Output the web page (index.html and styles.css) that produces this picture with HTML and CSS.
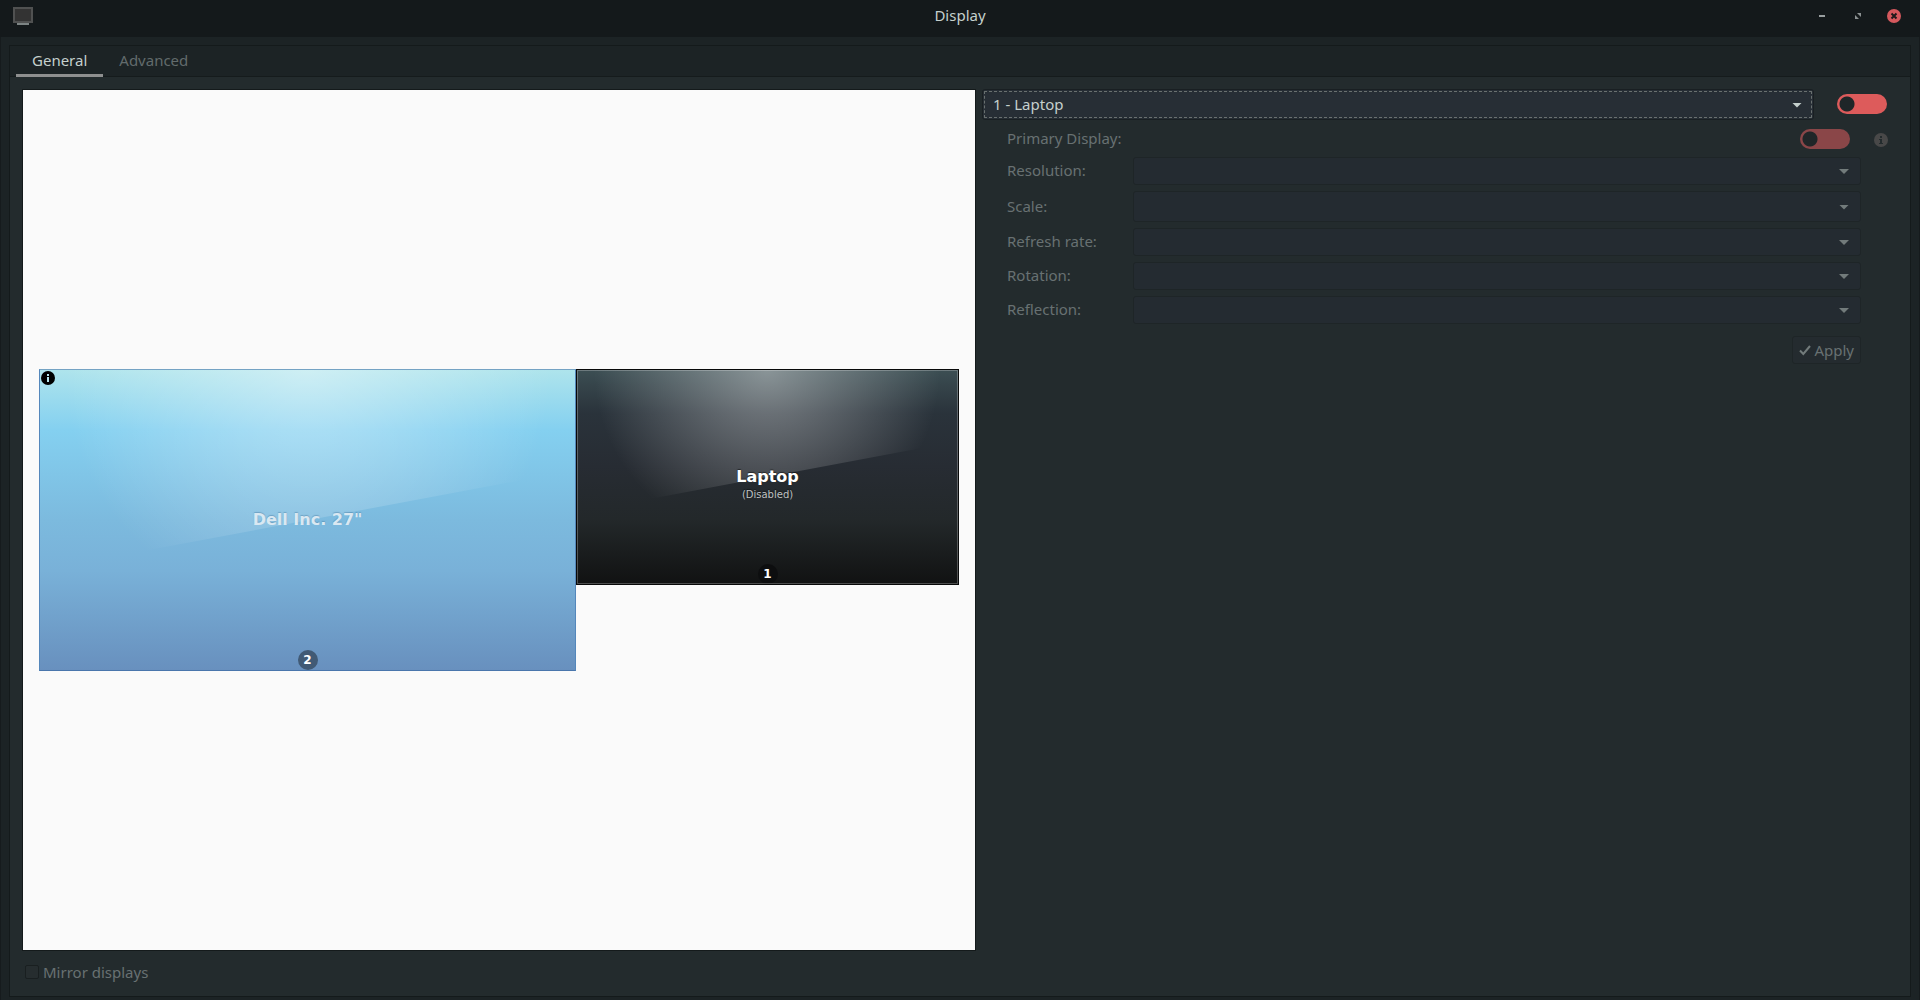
FILE: index.html
```html
<!DOCTYPE html>
<html lang="en">
<head>
<meta charset="utf-8">
<meta name="viewport" content="width=device-width, initial-scale=1">
<title>Display</title>
<link rel="stylesheet" href="styles.css">
</head>
<body>
<div class="window">
  <header class="titlebar">
    <svg class="app-icon" viewBox="0 0 20 18" aria-hidden="true">
      <rect width="20" height="16" fill="#505151"/>
      <rect x="2" y="2" width="16" height="12" fill="#333333"/>
      <rect x="4" y="16" width="12" height="2" fill="#7d8484"/>
    </svg>
    <h1 class="title">Display</h1>
    <div class="window-buttons">
      <button type="button" class="window-button" aria-label="Minimize">
        <svg viewBox="0 0 14 14"><rect x="4" y="6" width="6" height="2" fill="#999fa0"/></svg>
      </button>
      <button type="button" class="window-button" aria-label="Restore">
        <svg viewBox="0 0 14 14" fill="#8b9192"><path d="M6 4h4v4zM4 6l4 4H4z"/></svg>
      </button>
      <button type="button" class="window-button" aria-label="Close">
        <svg viewBox="0 0 14 14"><circle cx="7" cy="7" r="7" fill="#d5585d"/><path d="M4.5 4.5l5 5m0-5l-5 5" stroke="#20191b" stroke-width="2"/></svg>
      </button>
    </div>
  </header>

  <main class="content">
    <div class="notebook">
      <div class="tabs" role="tablist">
        <button type="button" class="tab tab-active" role="tab" aria-selected="true">General</button>
        <button type="button" class="tab" role="tab" aria-selected="false">Advanced</button>
      </div>

      <div class="page">
        <section class="layout-column">
          <div class="canvas">
            <div class="arrangement">
              <div class="monitor monitor-dell">
                <svg class="glare" viewBox="0 0 538 303" preserveAspectRatio="none" aria-hidden="true">
                  <defs><radialGradient id="glare-dell" gradientUnits="userSpaceOnUse" cx="269" cy="0" r="245">
                    <stop offset="0" stop-color="#fff" stop-opacity=".4"/><stop offset="1" stop-color="#fff" stop-opacity="0"/>
                  </radialGradient></defs>
                  <path d="M0 0H538V101L0 202z" fill="url(#glare-dell)"/>
                </svg>
                <svg class="monitor-info" viewBox="0 0 14 14" aria-hidden="true">
                  <circle cx="7" cy="7" r="7" fill="#000"/>
                  <path d="M6 3h2v2H6zM6 6h2v5H6z" fill="#b5e6ee"/>
                </svg>
                <span class="monitor-name">Dell Inc. 27"</span>
                <span class="badge">2</span>
              </div>
              <div class="monitor monitor-laptop">
                <svg class="glare" viewBox="0 0 383 216" preserveAspectRatio="none" aria-hidden="true">
                  <defs><radialGradient id="glare-laptop" gradientUnits="userSpaceOnUse" cx="191" cy="0" r="174">
                    <stop offset="0" stop-color="#fff" stop-opacity=".4"/><stop offset="1" stop-color="#fff" stop-opacity="0"/>
                  </radialGradient></defs>
                  <path d="M0 0H383V72L0 144z" fill="url(#glare-laptop)"/>
                </svg>
                <span class="monitor-name">Laptop<small class="monitor-state">(Disabled)</small></span>
                <span class="badge">1</span>
              </div>
            </div>
          </div>
          <label class="mirror"><input type="checkbox" class="check" disabled>Mirror displays</label>
        </section>

        <section class="settings-column">
          <div class="output-row">
            <div class="combo combo-focused">
              <select aria-label="Output"><option>1 - Laptop</option></select>
            </div>
            <input type="checkbox" role="switch" class="switch" aria-label="Use this output">
          </div>

          <div class="form">
            <label for="primary">Primary Display:</label>
            <input type="checkbox" role="switch" class="switch switch-primary" id="primary" disabled>
            <svg class="info" viewBox="0 0 14 14" aria-hidden="true">
              <circle cx="7" cy="7" r="7" fill="#484848"/>
              <path d="M6 3h2v2H6zM5 6h3v4h1v1H5v-1h1V7H5z" fill="#232b2d"/>
            </svg>
            <label for="resolution">Resolution:</label>
            <div class="combo"><select id="resolution" disabled></select></div>
            <label for="scale">Scale:</label>
            <div class="combo combo-tall"><select id="scale" disabled></select></div>
            <label for="rate">Refresh rate:</label>
            <div class="combo"><select id="rate" disabled></select></div>
            <label for="rotation">Rotation:</label>
            <div class="combo"><select id="rotation" disabled></select></div>
            <label for="reflection">Reflection:</label>
            <div class="combo"><select id="reflection" disabled></select></div>
            <button type="button" class="apply" disabled>
              <svg viewBox="0 0 12 12" aria-hidden="true"><path d="M1 6.5L4.3 10 11 2" fill="none" stroke="#727b7b" stroke-width="2"/></svg>Apply
            </button>
          </div>
        </section>
      </div>
    </div>
  </main>
</div>
</body>
</html>
```

FILE: styles.css
```css
* {
  box-sizing: border-box;
}

body {
  margin: 0;
  background: #1c2325;
  color: #c5d0cd;
  font: 15px/20px "Noto Sans", sans-serif;
}

button,
select {
  font: inherit;
  color: inherit;
}

svg {
  display: block;
}

.window {
  min-height: 100vh;
  display: flex;
  flex-direction: column;
}

/* Title bar */
.titlebar {
  height: 37px;
  padding: 0 19px 5px 13px;
  display: grid;
  grid-template-columns: 1fr auto 1fr;
  align-items: center;
  background: #14191b;
}

.app-icon {
  width: 20px;
  height: 18px;
}

.title {
  margin: 0;
  padding: 0 0 2px 6px;
  font-size: 15px;
  font-weight: 400;
}

.window-buttons {
  display: flex;
  justify-content: flex-end;
  gap: 22px;
}

.window-button {
  width: 14px;
  height: 14px;
  padding: 0;
  border: 0;
  background: none;
}

/* Notebook */
.content {
  flex: 1;
  display: flex;
  padding: 8px 8px 3px;
  border: solid #161b1d;
  border-width: 0 1px;
}

.notebook {
  flex: 1;
  min-width: 0;
  display: flex;
  flex-direction: column;
  border: 1px solid #141a1b;
  background: #232b2d;
}

.tabs {
  height: 31px;
  display: flex;
  padding-left: 6px;
  background: #1c2325;
  box-shadow: inset 0 -1px #151b1c;
}

.tab {
  padding: 0 16px 4px;
  border: 0;
  border-top: 3px solid transparent;
  border-bottom: 3px solid transparent;
  background: none;
  color: #626b6c;
}

.tab-active {
  border-bottom-color: #8e8f8f;
  color: #c5d0cd;
}

.page {
  flex: 1;
  display: grid;
  grid-template-columns: 954fr 916fr;
  gap: 6px;
  padding: 12px 12px 10px;
}

/* Monitor arrangement */
.layout-column {
  min-width: 0;
  display: flex;
  flex-direction: column;
  gap: 11px;
}

.canvas {
  flex: 1;
  display: flex;
  align-items: center;
  padding: 0 16px;
  border: 1px solid #141a1b;
  background: #fafafa;
}

.arrangement {
  flex: 1;
  display: flex;
  align-items: flex-start;
}

.monitor {
  position: relative;
  display: grid;
  place-items: center;
  border: 1px solid;
}

.monitor > * {
  grid-area: 1 / 1;
}

.monitor-dell {
  flex: 538 1 0;
  aspect-ratio: 538 / 303;
  border-color: #74a3c4 #5487bb #4976ac;
  background: linear-gradient(#aee4ec, #84d0f0 20%, #7cbade 50%, #79b1d8 67%, #6890be);
}

.monitor-laptop {
  flex: 383 1 0;
  aspect-ratio: 383 / 216;
  border-color: #080909;
  background: linear-gradient(#3c4e53, #2a333b 20%, #272c33 45%, #23282a 70%, #111212);
}

.monitor-laptop::after {
  content: "";
  position: absolute;
  inset: 0;
  border: 1px solid rgb(255 255 255 / 25%);
}

.glare {
  position: absolute;
  inset: 0;
  width: 100%;
  height: 100%;
}

.monitor-info {
  position: absolute;
  top: 1px;
  left: 1px;
  width: 14px;
  height: 14px;
}

.monitor-name {
  position: relative;
  font: bold 16px/20px "DejaVu Sans", sans-serif;
  color: #fff;
  text-shadow: 0 -1px 1px rgb(0 0 0 / 50%);
}

.monitor-dell .monitor-name {
  color: #d9e8f2;
  text-shadow: 0 -1px 1px rgb(60 110 150 / 40%);
}

.monitor-state {
  position: absolute;
  top: 100%;
  left: 0;
  right: 0;
  display: flex;
  justify-content: center;
  font-size: 10px;
  line-height: 16px;
  font-weight: 400;
  color: #bfc1c2;
}

.badge {
  position: relative;
  align-self: end;
  width: 20px;
  height: 20px;
  border-radius: 50%;
  background: rgb(12 13 14 / 85%);
  color: #fff;
  font: bold 12px/20px "DejaVu Sans", sans-serif;
  text-align: center;
}

.monitor-dell .badge {
  background: #415a75;
}

.mirror {
  display: flex;
  align-items: center;
  gap: 4px;
  padding: 0 0 4px 3px;
  color: #687172;
}

.check {
  appearance: none;
  width: 14px;
  height: 14px;
  margin: 0;
  border: 1px solid #191f20;
  border-radius: 2px;
  background: #262d2f;
}

/* Settings */
.settings-column {
  min-width: 0;
}

.output-row {
  display: flex;
  align-items: center;
  gap: 23px;
  padding-right: 11px;
}

.output-row .switch,
.switch-primary {
  margin-bottom: 2px;
}

.combo {
  position: relative;
  flex: 1;
  height: 28px;
}

.combo select {
  display: block;
  appearance: none;
  width: 100%;
  height: 100%;
  padding: 0 32px 2px 10px;
  border: 1px solid #1e2527;
  border-radius: 3px;
  background: #242b31;
  opacity: 1;
}

.combo::after {
  content: "";
  position: absolute;
  top: 50%;
  right: 12px;
  width: 10px;
  height: 5px;
  margin-top: -2px;
  background: #727b7b;
  clip-path: polygon(0 0, 100% 0, 50% 100%);
  pointer-events: none;
}

.combo-focused,
.combo-tall {
  height: 31px;
}

.combo-focused select {
  border-color: #191f22;
  background: #272e35;
  outline: 1px dashed #69706f;
  outline-offset: -3px;
}

.combo-focused::after {
  background: #c5d0cd;
}

.switch {
  appearance: none;
  width: 50px;
  height: 20px;
  margin: 0;
  border-radius: 10px;
  background: radial-gradient(circle at 10px 10px, #1f2628 7px, #dd5b5b 8px);
}

.switch:disabled {
  background: radial-gradient(circle at 10px 10px, #1f2628 7px, #8a4648 8px);
}

.form {
  display: grid;
  grid-template-columns: 113px 1fr 14px;
  grid-template-rows: 25px;
  gap: 6px 13px;
  align-items: center;
  padding: 6px 10px 0 25px;
  color: #687172;
}

.form label {
  grid-column: 1;
  padding-bottom: 2px;
  white-space: nowrap;
}

.switch-primary {
  justify-self: end;
  margin-right: 11px;
}

.info {
  align-self: end;
  margin-bottom: 4px;
}

.apply {
  grid-column: 2;
  justify-self: end;
  display: flex;
  align-items: center;
  gap: 3px;
  height: 28px;
  margin-top: 6px;
  padding: 0 6px;
  border: 1px solid #1e2527;
  border-radius: 3px;
  background: #242b2f;
}

.apply svg {
  width: 12px;
  height: 12px;
}
```
